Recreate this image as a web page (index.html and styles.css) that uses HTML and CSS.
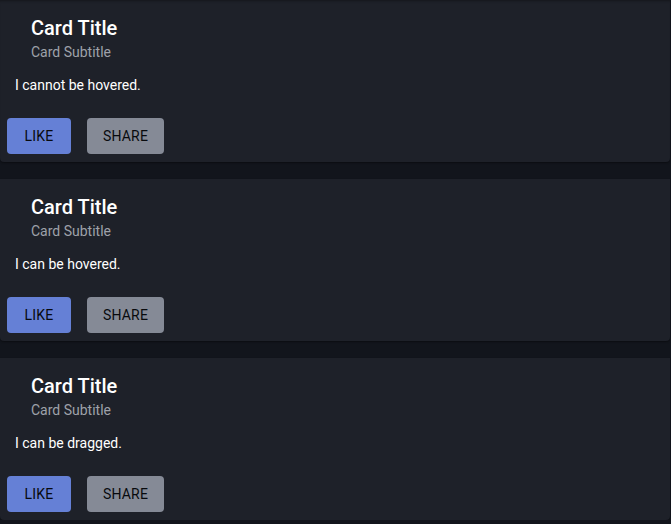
FILE: index.html
```html
<!DOCTYPE html>
<html>
<head>
<meta charset="utf-8">
<link rel="stylesheet" href="styles.css">
</head>
<body>
<div class="list">
  <div class="card">
    <div class="header">
      <div class="title">Card Title</div>
      <div class="subtitle">Card Subtitle</div>
    </div>
    <div class="text">I cannot be hovered.</div>
    <div class="actions">
      <button class="btn like">Like</button>
      <button class="btn share">Share</button>
    </div>
  </div>
  <div class="card">
    <div class="header">
      <div class="title">Card Title</div>
      <div class="subtitle">Card Subtitle</div>
    </div>
    <div class="text">I can be hovered.</div>
    <div class="actions">
      <button class="btn like">Like</button>
      <button class="btn share">Share</button>
    </div>
  </div>
  <div class="card">
    <div class="header">
      <div class="title">Card Title</div>
      <div class="subtitle">Card Subtitle</div>
    </div>
    <div class="text">I can be dragged.</div>
    <div class="actions">
      <button class="btn like">Like</button>
      <button class="btn share">Share</button>
    </div>
  </div>
</div>
</body>
</html>
```
FILE: styles.css
```css
html, body {
  margin: 0;
  padding: 0;
  background: #12151c;
  font-family: Roboto, "Liberation Sans", sans-serif;
  overflow: hidden;
}
.list {
  display: flex;
  flex-direction: column;
  gap: 17px;
  width: 670px;
}
.card {
  background: #1e2129;
  height: 162px;
  box-sizing: border-box;
  padding-top: 16px;
  border-radius: 0 0 4px 4px;
  box-shadow: 0 1px 2px rgba(0,0,0,0.4);
  display: flex;
  flex-direction: column;
}
.list .card:first-child {
  box-shadow: inset 0 3px 3px -2px rgba(0,0,0,0.35), 0 1px 2px rgba(0,0,0,0.4);
}
.header {
  padding-left: 31px;
}
.title {
  font-size: 20px;
  line-height: 24px;
  font-weight: 500;
  color: #ffffff;
}
.subtitle {
  margin-top: 2px;
  font-size: 14px;
  line-height: 20px;
  color: #9ea2aa;
}
.text {
  margin-top: 13px;
  padding-left: 15px;
  font-size: 14px;
  line-height: 20px;
  color: #ffffff;
}
.actions {
  margin-top: 23px;
  padding-left: 7px;
  display: flex;
  gap: 16px;
}
.btn {
  height: 36px;
  border: none;
  border-radius: 4px;
  font-family: Roboto, "Liberation Sans", sans-serif;
  font-size: 14px;
  font-weight: 400;
  text-transform: uppercase;
  color: #080a0e;
  padding: 0;
  text-align: center;
  letter-spacing: 0.2px;
}
.like {
  width: 64px;
  background: #6580d6;
}
.share {
  width: 77px;
  background: #858a96;
}
```
